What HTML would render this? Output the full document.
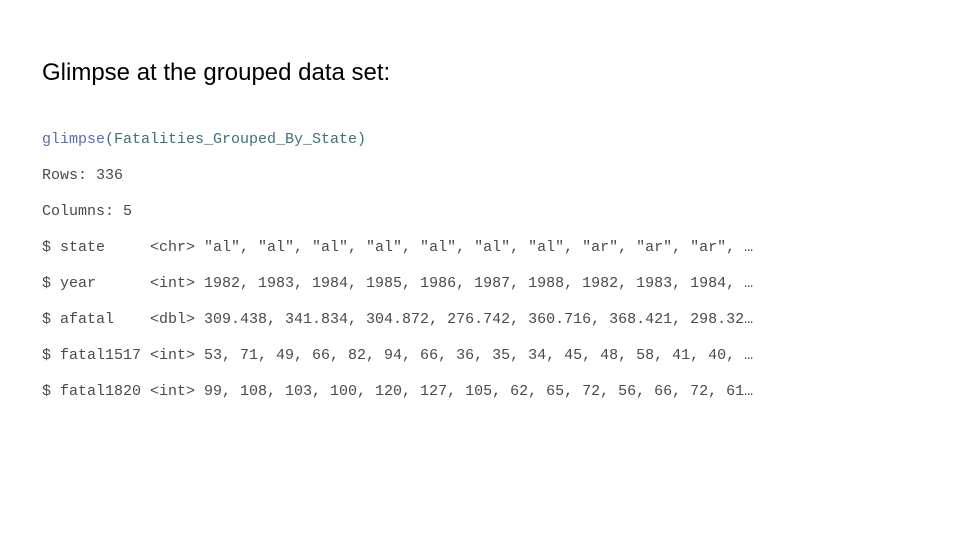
<!DOCTYPE html>
<html><head><meta charset="utf-8"><style>
body{margin:0;width:960px;height:540px;background:#fff;position:relative;overflow:hidden}
h1{position:absolute;left:42px;top:59px;margin:0;font:24px "Liberation Sans",sans-serif;color:#000;white-space:nowrap}
.c{position:absolute;left:42px;font:15px "Liberation Mono",monospace;color:#4a4a4a;white-space:pre;line-height:16px}
</style></head><body>
<h1>Glimpse at the grouped data set:</h1>
<div class="c" style="top:132px"><span style="color:#5b6bb5">glimpse</span><span style="color:#3e6f7c">(Fatalities_Grouped_By_State)</span></div>
<div class="c" style="top:168px">Rows: 336</div>
<div class="c" style="top:204px">Columns: 5</div>
<div class="c" style="top:240px">$ state     &lt;chr&gt; "al", "al", "al", "al", "al", "al", "al", "ar", "ar", "ar", …</div>
<div class="c" style="top:276px">$ year      &lt;int&gt; 1982, 1983, 1984, 1985, 1986, 1987, 1988, 1982, 1983, 1984, …</div>
<div class="c" style="top:312px">$ afatal    &lt;dbl&gt; 309.438, 341.834, 304.872, 276.742, 360.716, 368.421, 298.32…</div>
<div class="c" style="top:348px">$ fatal1517 &lt;int&gt; 53, 71, 49, 66, 82, 94, 66, 36, 35, 34, 45, 48, 58, 41, 40, …</div>
<div class="c" style="top:384px">$ fatal1820 &lt;int&gt; 99, 108, 103, 100, 120, 127, 105, 62, 65, 72, 56, 66, 72, 61…</div>
</body></html>
